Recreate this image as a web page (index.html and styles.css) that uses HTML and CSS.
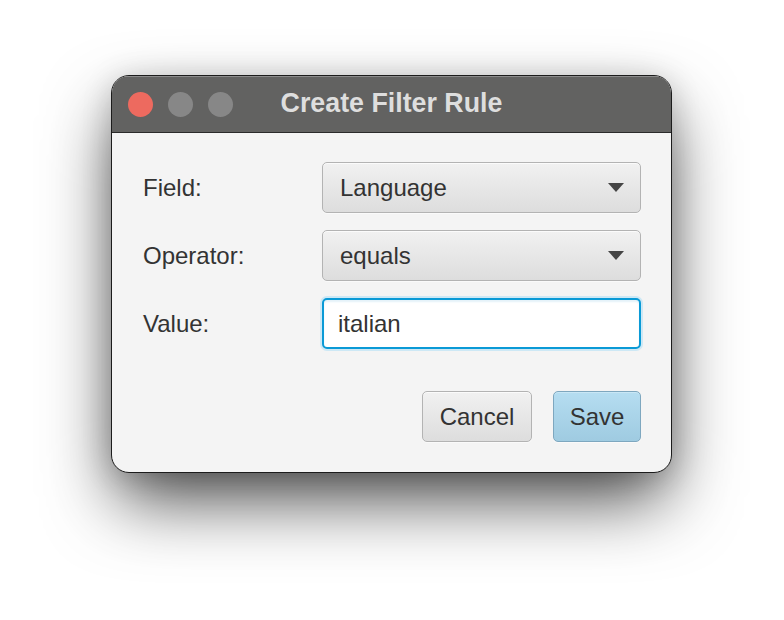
FILE: index.html
```html
<!DOCTYPE html>
<html>
<head>
<meta charset="utf-8">
<link rel="stylesheet" href="styles.css">
</head>
<body>
<div class="window">
  <div class="titlebar">
    <div class="lights">
      <span class="light red"></span>
      <span class="light gray"></span>
      <span class="light gray"></span>
    </div>
    <div class="title">Create Filter Rule</div>
    <div></div>
  </div>
  <div class="content">
    <div class="form">
      <div class="label">Field:</div>
      <div class="combo"><span>Language</span><span class="arrow"></span></div>
      <div class="label">Operator:</div>
      <div class="combo"><span>equals</span><span class="arrow"></span></div>
      <div class="label">Value:</div>
      <div class="field">italian</div>
    </div>
    <div class="buttons">
      <div class="btn cancel">Cancel</div>
      <div class="btn primary">Save</div>
    </div>
  </div>
</div>
</body>
</html>
```

FILE: styles.css
```css
html, body {
  margin: 0;
  padding: 0;
  background: #ffffff;
}
body {
  min-height: 620px;
  box-sizing: border-box;
  padding-top: 75px;
  font-family: "Liberation Sans", Arial, sans-serif;
}
.window {
  width: 561px;
  height: 398px;
  box-sizing: border-box;
  margin: 0 0 0 111px;
  border: 1px solid #1c1c1c;
  border-radius: 18px;
  overflow: hidden;
  background: #f4f4f4;
  box-shadow: 0 32px 70px -6px rgba(0,0,0,0.72), 0 4px 30px rgba(0,0,0,0.16);
  display: flex;
  flex-direction: column;
}
.titlebar {
  height: 57px;
  flex: none;
  box-sizing: border-box;
  background: #626261;
  border-bottom: 1px solid #2a2a2a;
  box-shadow: inset 0 1px 0 #8c8c8c;
  display: grid;
  grid-template-columns: 1fr auto 1fr;
  align-items: center;
}
.lights {
  display: flex;
  gap: 15px;
  padding-left: 16px;
}
.light {
  width: 25px;
  height: 25px;
  border-radius: 50%;
  display: block;
}
.red { background: #ed6a5f; }
.gray { background: #878787; }
.title {
  color: #dedede;
  font-weight: bold;
  font-size: 26.8px;
  padding-bottom: 2px;
}
.content {
  flex: 1;
  padding: 29px 30px 0 31px;
  display: flex;
  flex-direction: column;
}
.form {
  display: grid;
  grid-template-columns: 179px 1fr;
  grid-auto-rows: 51px;
  row-gap: 17px;
  align-items: center;
}
.label {
  font-size: 24px;
  color: #333333;
}
.combo {
  height: 51px;
  box-sizing: border-box;
  border: 1px solid #b3b3b3;
  border-radius: 5px;
  background: linear-gradient(#f1f1f1, #dddddd);
  box-shadow: inset 0 1px 0 #fbfbfb, 0 1px 0 #fafafa;
  display: flex;
  align-items: center;
  justify-content: space-between;
  padding: 0 16px 0 17px;
  font-size: 24px;
  color: #333333;
}
.arrow {
  width: 0;
  height: 0;
  border-left: 8.5px solid transparent;
  border-right: 8.5px solid transparent;
  border-top: 9px solid #454545;
}
.field {
  height: 51px;
  box-sizing: border-box;
  border: 2px solid #0a9ad6;
  border-radius: 5px;
  background: #ffffff;
  box-shadow: 0 0 0 2px #cde8f5, inset 0 2px 2px #e4f2f9;
  display: flex;
  align-items: center;
  padding: 0 14px;
  font-size: 24px;
  color: #333333;
}
.buttons {
  margin-top: 42px;
  display: flex;
  justify-content: flex-end;
  gap: 21px;
}
.btn {
  height: 51px;
  box-sizing: border-box;
  border: 1px solid #b3b3b3;
  border-radius: 5px;
  background: linear-gradient(#f1f1f1, #dddddd);
  box-shadow: inset 0 1px 0 #fbfbfb, 0 1px 0 #fafafa;
  display: flex;
  align-items: center;
  justify-content: center;
  font-size: 24px;
  color: #333333;
}
.cancel { width: 110px; }
.primary {
  width: 88px;
  border-color: #7ea7bf;
  background: linear-gradient(#b5ddf1, #9fcbe1);
  box-shadow: inset 0 1px 0 #c9e7f6, 0 1px 0 #fafafa;
}
```
